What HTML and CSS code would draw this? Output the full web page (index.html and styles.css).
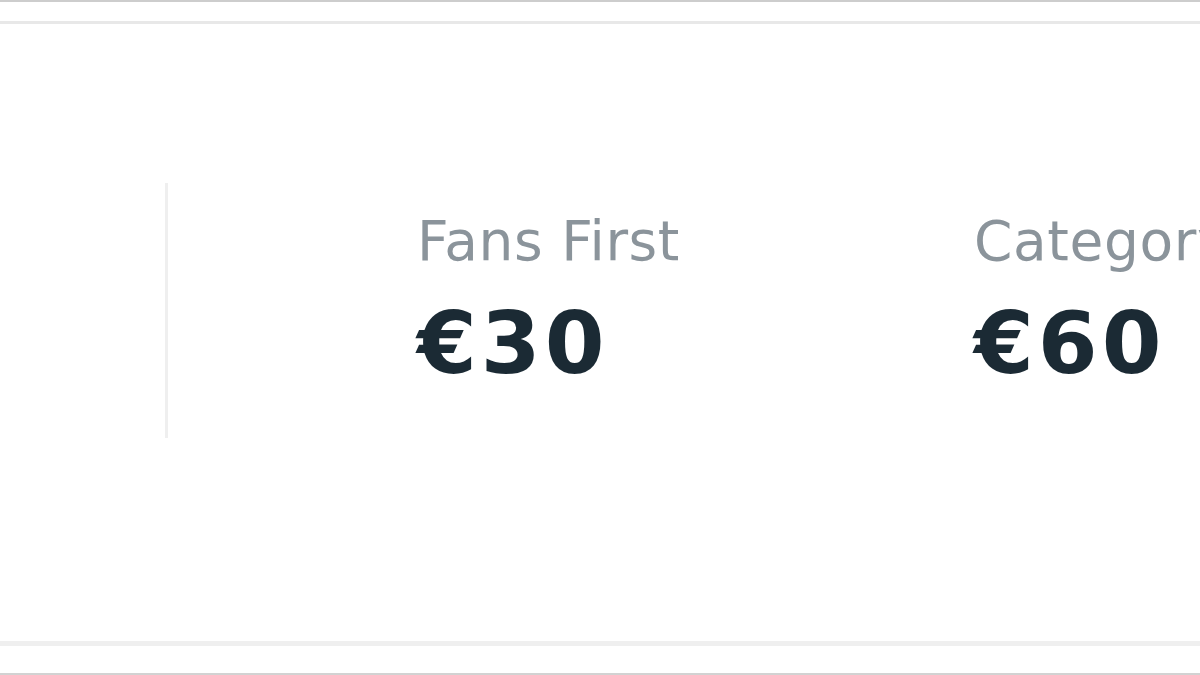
FILE: index.html
```html
<!DOCTYPE html>
<html lang="en">

<head>
    <meta charset="utf-8">
    <meta name="viewport" content="width=device-width, initial-scale=1">
    <link rel="stylesheet" href="styles.css">
</head>

<body>
    <div id="frame">
        <section id="price-card">
            <div class="divider"></div>
            <div class="prices">
                <div class="price">
                    <span class="price-label">Fans First</span>
                    <span class="price-value">€30</span>
                </div>
                <div class="price">
                    <span class="price-label">Category 1</span>
                    <span class="price-value">€60</span>
                </div>
            </div>
        </section>
    </div>
</body>

</html>
```

FILE: styles.css
```css
html,
body {
    width: 100%;
    height: 100%;
    margin: 0;
    padding: 0;
    overflow: hidden;
    background: #ffffff;
}

#frame {
    height: 675px;
    box-sizing: border-box;
    border-top: 2px solid #cdcdcd;
    border-bottom: 2px solid #d2d2d2;
    padding-top: 19px;
}

#price-card {
    display: flex;
    align-items: flex-start;
    box-sizing: border-box;
    height: 625px;
    border-top: 3px solid #e8e8e8;
    border-bottom: 5px solid #efefef;
    padding-top: 159px;
    padding-left: 165px;
}

#price-card .divider {
    width: 3px;
    height: 255px;
    background: #efefef;
    flex-shrink: 0;
}

.prices {
    display: grid;
    grid-template-columns: repeat(2, 557px);
    margin-top: 31px;
    margin-left: 249px;
    white-space: nowrap;
}

.price {
    display: flex;
    flex-direction: column;
    font-family: "DejaVu Sans", sans-serif;
}

.price-label {
    font-size: 55px;
    line-height: 55px;
    color: #8b949b;
    letter-spacing: 0.6px;
}

.price-value {
    margin-top: 31px;
    font-size: 86px;
    line-height: 86px;
    font-weight: 700;
    color: #1b2a34;
    letter-spacing: 4px;
}
```
